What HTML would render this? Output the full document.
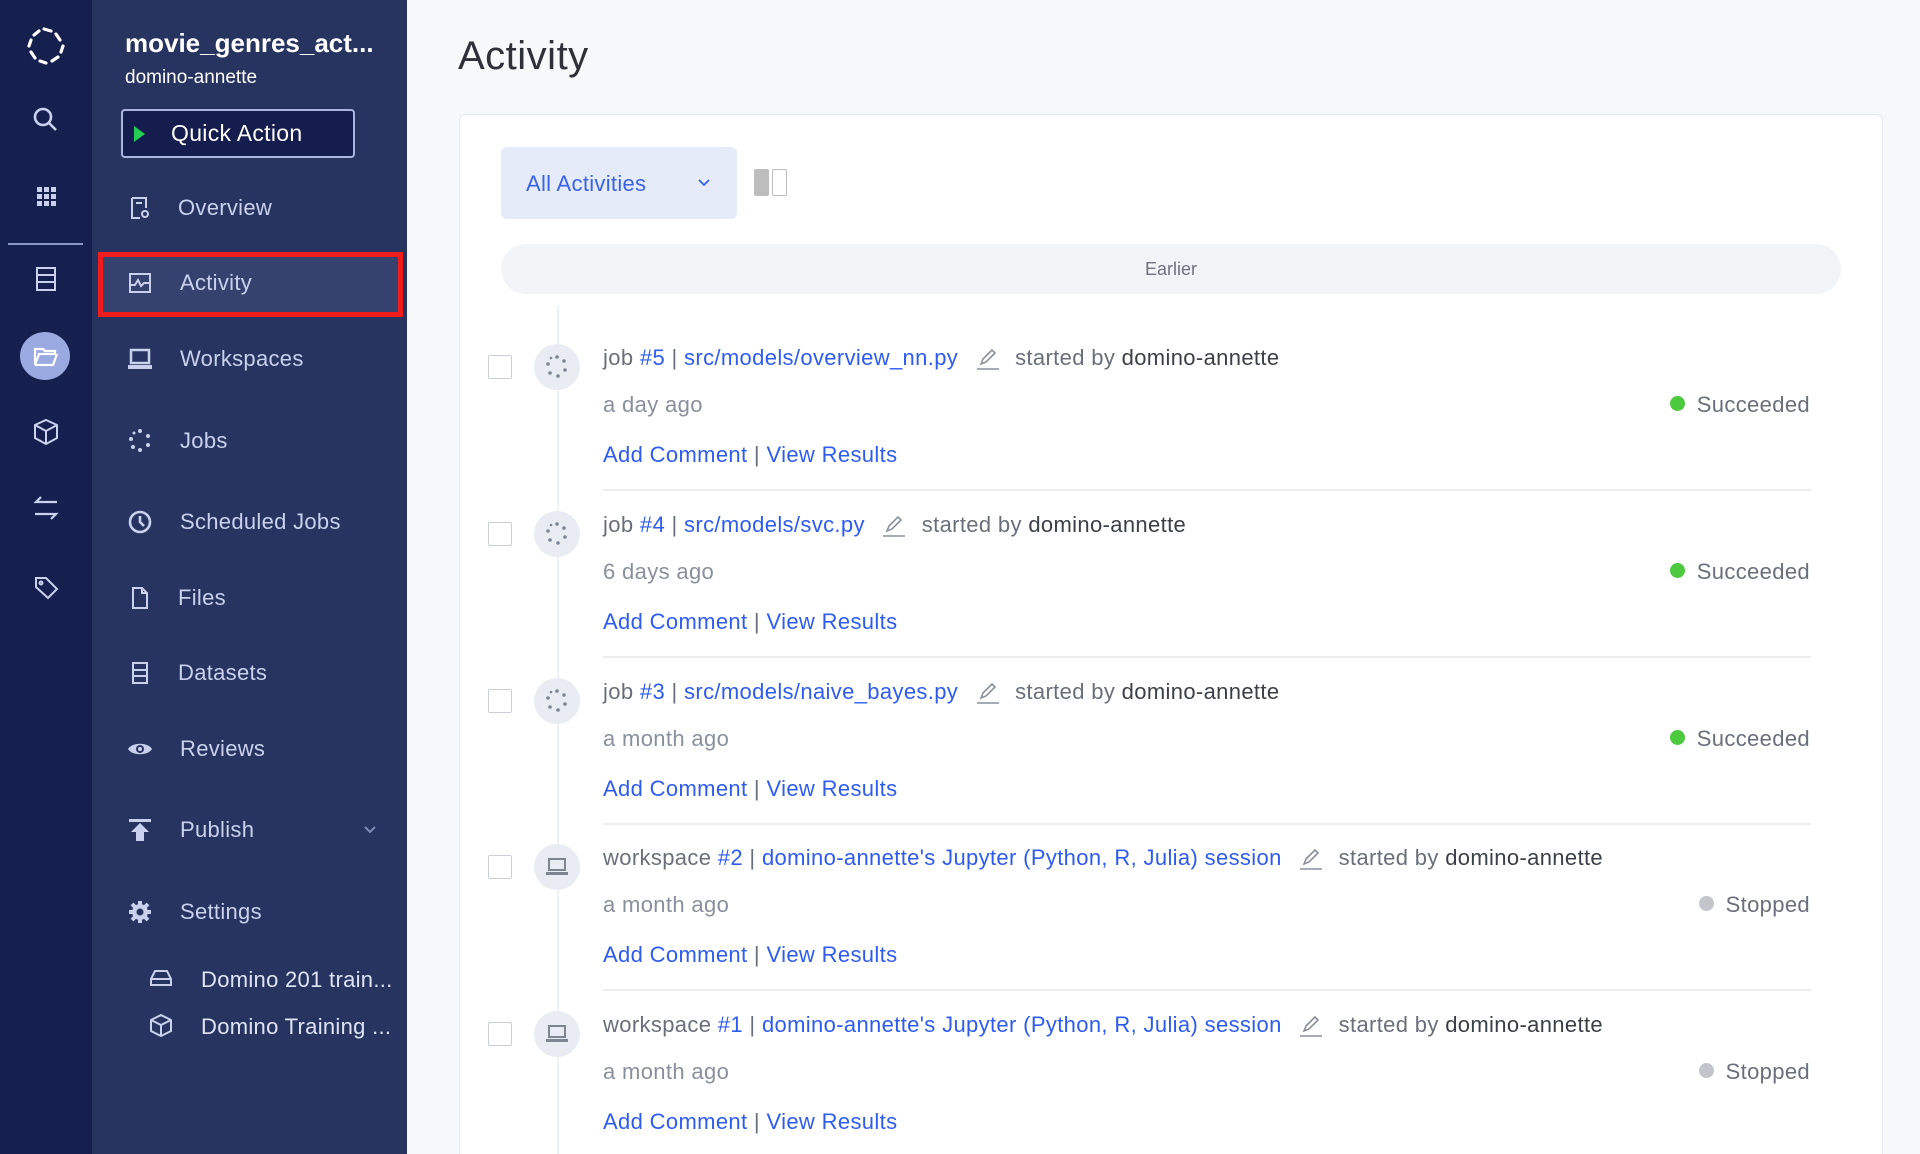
<!DOCTYPE html>
<html><head><meta charset="utf-8"><style>
*{box-sizing:border-box;margin:0;padding:0}
html,body{width:1920px;height:1154px;overflow:hidden}
body{font-family:"Liberation Sans",sans-serif;background:#f7f8fa;position:relative}
.rail{position:absolute;left:0;top:0;width:92px;height:1154px;background:#16204f}
.side{position:absolute;left:92px;top:0;width:315px;height:1154px;background:#27345f}
.ab{position:absolute}
.ri{position:absolute;left:30px;width:32px;height:32px}
.nav{position:absolute;left:180px;color:#c9d1ee;font-size:22px;transform:translateY(-50%);white-space:nowrap;letter-spacing:0.3px}
.ni{position:absolute;left:126px;width:28px;height:28px;transform:translateY(-50%)}
.card{position:absolute;left:459px;top:114px;width:1424px;height:1040px;background:#fff;border:1px solid #e6e9ef;border-bottom:none;border-radius:6px 6px 0 0;overflow:hidden}
.row{position:absolute;left:0;width:1424px}
.t{position:absolute;font-size:22px;color:#6a6f7a;white-space:nowrap;letter-spacing:0.35px}
.lk{color:#2f5cf0}
.dk{color:#3c3f46}
</style></head><body>
<div class="rail">
 <svg class="ri" style="left:25px;top:25px;width:42px;height:42px" viewBox="0 0 42 42" fill="none" stroke="#fff" stroke-width="3.2" stroke-linecap="round">
  <g transform="translate(21 21)">
  <line x1="-2" y1="-17" x2="5" y2="-15"/><line x1="10" y1="-12" x2="14" y2="-6"/><line x1="17" y1="0" x2="15" y2="6"/><line x1="12" y1="11" x2="6" y2="15"/><line x1="0" y1="17" x2="-6" y2="15"/><line x1="-11" y1="12" x2="-15" y2="6"/><line x1="-17" y1="0" x2="-15" y2="-6"/><line x1="-12" y1="-11" x2="-7" y2="-15"/></g></svg>
 <svg class="ri" style="top:104px" viewBox="0 0 32 32" fill="none" stroke="#c9d1ee" stroke-width="2.6"><circle cx="13" cy="13" r="8"/><line x1="19" y1="19" x2="26" y2="26"/></svg>
 <svg class="ri" style="top:180px" viewBox="0 0 32 32" fill="#c9d1ee"><rect x="7" y="7" width="5" height="5"/><rect x="14" y="7" width="5" height="5"/><rect x="21" y="7" width="5" height="5"/><rect x="7" y="14" width="5" height="5"/><rect x="14" y="14" width="5" height="5"/><rect x="21" y="14" width="5" height="5"/><rect x="7" y="21" width="5" height="5"/><rect x="14" y="21" width="5" height="5"/><rect x="21" y="21" width="5" height="5"/></svg>
 <div class="ab" style="left:8px;top:243px;width:75px;height:2px;background:#8a96c6"></div>
 <svg class="ri" style="top:263px" viewBox="0 0 32 32" fill="none" stroke="#c9d1ee" stroke-width="2"><rect x="7" y="5" width="18" height="22"/><line x1="7" y1="12" x2="25" y2="12"/><line x1="7" y1="19" x2="25" y2="19"/></svg>
 <div class="ab" style="left:20px;top:332px;width:50px;height:48px;border-radius:50%;background:#9aa9e0"></div>
 <svg class="ri" style="top:340px" viewBox="0 0 32 32" fill="none" stroke="#fff" stroke-width="2.2"><path d="M5 9h8l2 2h10v3H9l-4 11z M5 25h18l4-11"/></svg>
 <svg class="ri" style="top:416px" viewBox="0 0 32 32" fill="none" stroke="#c9d1ee" stroke-width="2"><path d="M16 4l11 5v13l-11 6-11-6V9z M5 9l11 6 11-6 M16 15v13"/></svg>
 <svg class="ri" style="top:492px" viewBox="0 0 32 32" fill="none" stroke="#c9d1ee" stroke-width="2.2"><path d="M27 10H6l5-5 M5 22h21l-5 5"/></svg>
 <svg class="ri" style="top:571px" viewBox="0 0 32 32" fill="none" stroke="#c9d1ee" stroke-width="2"><path d="M6 7h10l11 11-9 9L6 16z"/><circle cx="11" cy="12" r="1.5"/></svg>
</div>
<div class="side">
 <div class="ab" style="left:33px;top:28px;color:#fff;font-size:26px;font-weight:bold;white-space:nowrap">movie_genres_act...</div>
 <div class="ab" style="left:33px;top:67px;color:#fff;font-size:19px">domino-annette</div>
 <div class="ab" style="left:29px;top:109px;width:234px;height:49px;border:2px solid #aab4dd;border-radius:4px;background:#141d4d"></div>
 <div class="ab" style="left:42px;top:126px;width:0;height:0;border-top:8px solid transparent;border-bottom:8px solid transparent;border-left:11px solid #22cc55"></div>
 <div class="ab" style="left:79px;top:120px;color:#fff;font-size:23px;letter-spacing:0.3px">Quick Action</div>
 <div class="ab" style="left:6px;top:252px;width:305px;height:65px;border:5px solid #ee1c1c;background:#35426e"></div>
</div>
<div style="position:absolute;left:0;top:0">
 <svg class="ni" style="top:208px" viewBox="0 0 28 28" fill="none" stroke="#c9d1ee" stroke-width="2"><path d="M6 4h14v10 M6 4v20h8"/><line x1="10" y1="9" x2="16" y2="9"/><circle cx="19" cy="20" r="3"/></svg>
 <div class="nav" style="top:208px;left:178px">Overview</div>
 <svg class="ni" style="top:283px" viewBox="0 0 28 28" fill="none" stroke="#c9d1ee" stroke-width="2"><rect x="4" y="5" width="20" height="18"/><path d="M4 16h5l3-5 3 6 3-3h6"/></svg>
 <div class="nav" style="top:283px">Activity</div>
 <svg class="ni" style="top:359px" viewBox="0 0 28 28" fill="#c9d1ee"><rect x="5" y="5" width="18" height="13" fill="none" stroke="#c9d1ee" stroke-width="2.5"/><rect x="2" y="20" width="24" height="4"/></svg>
 <div class="nav" style="top:359px">Workspaces</div>
 <svg class="ni" style="top:441px" viewBox="0 0 28 28" fill="#c9d1ee"><circle cx="14" cy="4" r="2"/><circle cx="22" cy="9" r="2"/><circle cx="22" cy="18" r="2"/><circle cx="14" cy="23" r="2"/><circle cx="7" cy="20" r="2"/><circle cx="5" cy="12" r="2"/><circle cx="8" cy="6" r="1.5"/></svg>
 <div class="nav" style="top:441px">Jobs</div>
 <svg class="ni" style="top:522px" viewBox="0 0 28 28" fill="none" stroke="#c9d1ee" stroke-width="2.6"><circle cx="14" cy="14" r="10"/><path d="M14 8v6l4 4"/></svg>
 <div class="nav" style="top:522px">Scheduled Jobs</div>
 <svg class="ni" style="top:598px" viewBox="0 0 28 28" fill="none" stroke="#c9d1ee" stroke-width="2"><path d="M7 4h9l5 5v15H7z M16 4v5h5"/></svg>
 <div class="nav" style="top:598px;left:178px">Files</div>
 <svg class="ni" style="top:673px" viewBox="0 0 28 28" fill="none" stroke="#c9d1ee" stroke-width="2"><rect x="7" y="4" width="14" height="20"/><line x1="7" y1="11" x2="21" y2="11"/><line x1="7" y1="17" x2="21" y2="17"/></svg>
 <div class="nav" style="top:673px;left:178px">Datasets</div>
 <svg class="ni" style="top:749px" viewBox="0 0 28 28" fill="#c9d1ee"><path d="M2 14c4-7 20-7 24 0-4 7-20 7-24 0z"/><circle cx="14" cy="14" r="4" fill="#27345f"/><circle cx="14" cy="14" r="2"/></svg>
 <div class="nav" style="top:749px">Reviews</div>
 <svg class="ni" style="top:830px" viewBox="0 0 28 28" fill="#c9d1ee"><rect x="3" y="3" width="22" height="3"/><path d="M14 7l9 9h-5v9h-8v-9H5z"/></svg>
 <div class="nav" style="top:830px">Publish</div>
 <svg class="ab" style="left:363px;top:825px" width="14" height="10" viewBox="0 0 14 10" fill="none" stroke="#7f8ab5" stroke-width="2"><path d="M2 2l5 5 5-5"/></svg>
 <svg class="ni" style="top:912px" viewBox="0 0 28 28" fill="#c9d1ee"><circle cx="14" cy="14" r="8"/><g stroke="#c9d1ee" stroke-width="4"><line x1="14" y1="3" x2="14" y2="25"/><line x1="3" y1="14" x2="25" y2="14"/><line x1="6" y1="6" x2="22" y2="22"/><line x1="22" y1="6" x2="6" y2="22"/></g><circle cx="14" cy="14" r="3.5" fill="#27345f"/></svg>
 <div class="nav" style="top:912px">Settings</div>
 <svg class="ni" style="left:147px;top:978px" viewBox="0 0 28 28" fill="none" stroke="#c9d1ee" stroke-width="2"><path d="M4 15l4-8h12l4 8v6H4z M4 15h20"/></svg>
 <div class="nav" style="top:980px;left:201px;color:#dfe4f6">Domino 201 train...</div>
 <svg class="ni" style="left:147px;top:1025px" viewBox="0 0 28 28" fill="none" stroke="#c9d1ee" stroke-width="2"><path d="M14 4l10 5v11l-10 5-10-5V9z M4 9l10 5 10-5 M14 14v11"/></svg>
 <div class="nav" style="top:1027px;left:201px;color:#dfe4f6">Domino Training ...</div>
</div>

<div class="ab" style="left:458px;top:34px;font-size:40px;color:#2f3138;letter-spacing:0.5px">Activity</div>
<div class="card">
 <div class="ab" style="left:41px;top:32px;width:236px;height:72px;background:#e5ebf8;border-radius:6px"></div>
 <div class="ab" style="left:66px;top:56px;font-size:22px;color:#3a62e6;letter-spacing:0.3px">All Activities</div>
 <svg class="ab" style="left:236px;top:62px" width="16" height="12" viewBox="0 0 16 12" fill="none" stroke="#3a62e6" stroke-width="1.8"><path d="M3 3l5 5 5-5"/></svg>
 <div class="ab" style="left:294px;top:54px;width:15px;height:27px;background:#bdbdbd;border-radius:2px"></div>
 <div class="ab" style="left:312px;top:54px;width:15px;height:27px;border:1.5px solid #bdbdbd;border-radius:2px"></div>
 <div class="ab" style="left:41px;top:129px;width:1340px;height:50px;background:#f2f4f8;border-radius:25px;text-align:center;line-height:50px;font-size:18px;color:#6d7380">Earlier</div>
 <div class="ab" style="left:97px;top:190px;width:2px;height:880px;background:#eef1f6"></div>
 <div id="rows"></div>
</div>
<script>
var d=[["job","#5","src/models/overview_nn.py","a day ago","Succeeded"],["job","#4","src/models/svc.py","6 days ago","Succeeded"],["job","#3","src/models/naive_bayes.py","a month ago","Succeeded"],["workspace","#2","domino-annette's Jupyter (Python, R, Julia) session","a month ago","Stopped"],["workspace","#1","domino-annette's Jupyter (Python, R, Julia) session","a month ago","Stopped"]];
var h="";
d.forEach(function(r,i){var y=244+i*166.8-114;var ok=r[4]=="Succeeded";
var ic=r[0]=="job"?'<svg width="46" height="46" viewBox="0 0 46 46"><circle cx="23" cy="23" r="23" fill="#e9edf3"/><g fill="#7d8593"><circle cx="23" cy="13" r="1.8"/><circle cx="30" cy="17" r="1.8"/><circle cx="31" cy="26" r="1.8"/><circle cx="24" cy="32" r="1.8"/><circle cx="16" cy="29" r="1.8"/><circle cx="14" cy="20" r="1.8"/><circle cx="17" cy="14" r="1.3"/></g></svg>':'<svg width="46" height="46" viewBox="0 0 46 46"><circle cx="23" cy="23" r="23" fill="#e9edf3"/><rect x="15" y="15" width="16" height="11" fill="none" stroke="#7d8593" stroke-width="2"/><rect x="12" y="28" width="22" height="3" fill="#7d8593"/></svg>';
h+='<div class="row" style="top:'+y+'px;height:166px">';
h+='<div class="ab" style="left:28px;top:110px;width:24px;height:24px;border:1.5px solid #ccd0d6;border-radius:2px;background:#fff"></div>';
h+='<div class="ab" style="left:74px;top:99px">'+ic+'</div>';
h+='<div class="t" style="left:143px;top:100px">'+r[0]+' <span class="lk">'+r[1]+'</span> | <span class="lk">'+r[2]+'</span> <svg width="28" height="24" viewBox="0 0 28 24" style="vertical-align:-6px;margin:0 8px" fill="none" stroke="#8a909b" stroke-width="1.6"><path d="M8 17l2-5 9-9 3 3-9 9z"/><line x1="4" y1="22" x2="26" y2="22"/></svg> started by <span class="dk">domino-annette</span></div>';
h+='<div class="t" style="left:143px;top:147px;color:#8a909b">'+r[3]+'</div>';
h+='<div class="t" style="right:74px;top:147px;color:#6a6f7a"><span style="display:inline-block;width:15px;height:15px;border-radius:50%;background:'+(ok?'#4cc93f':'#c2c5ca')+';margin-right:12px;vertical-align:1px"></span>'+r[4]+'</div>';
h+='<div class="t" style="left:143px;top:197px"><span class="lk">Add Comment</span> | <span class="lk">View Results</span></div>';
if(i<4)h+='<div class="ab" style="left:143px;top:244px;width:1208px;height:2px;background:#eceef2"></div>';
h+='</div>';});
document.getElementById("rows").innerHTML=h;
</script>
</body></html>
